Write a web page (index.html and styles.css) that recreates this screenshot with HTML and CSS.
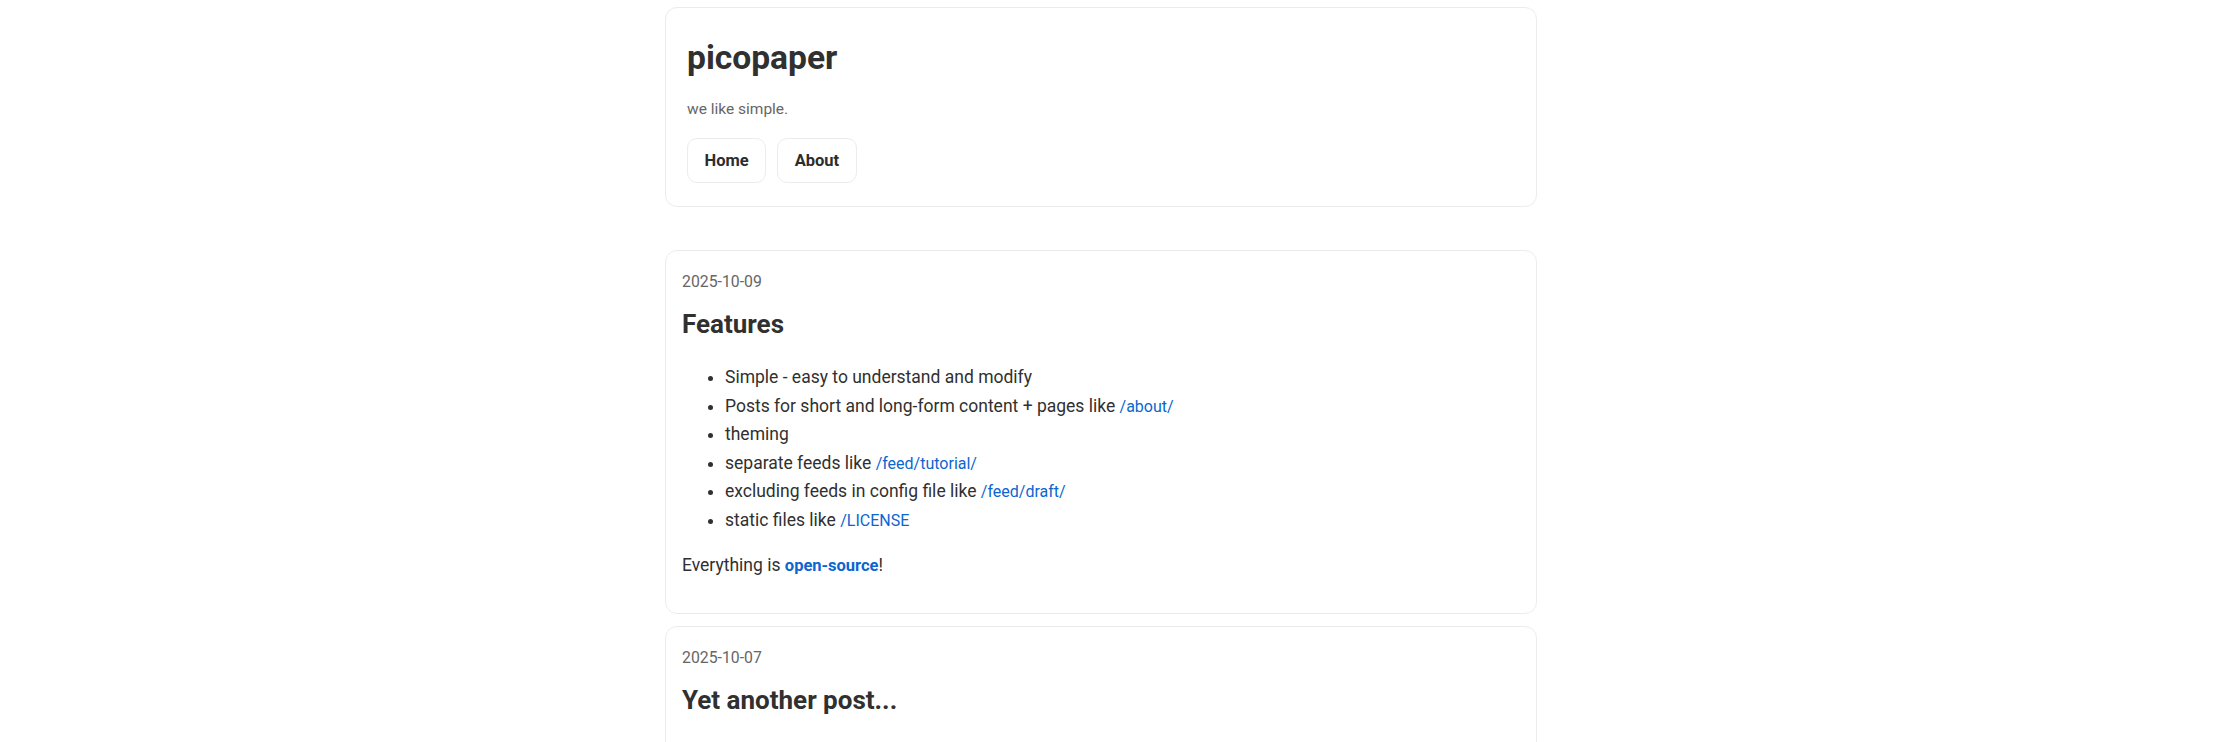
FILE: index.html
```html
<!DOCTYPE html>
<html lang="en">
<head>
  <meta charset="UTF-8">
  <meta name="viewport" content="width=device-width, initial-scale=1.0">
  <title>picopaper</title>
  <link rel="stylesheet" href="styles.css">
</head>
<body>

  <main class="page">
    <header class="site-header">
      <h1 class="site-title">picopaper</h1>
      <p class="site-tagline">we like simple.</p>
      <nav class="site-nav">
        <a class="nav-btn" href="#">Home</a>
        <a class="nav-btn" href="#">About</a>
      </nav>
    </header>

    <div class="posts">
      <article class="post">
        <div class="post-date">2025-10-09</div>
        <h2 class="post-title">Features</h2>
        <ul class="post-list">
          <li>Simple - easy to understand and modify</li>
          <li>Posts for short and long-form content + pages like <a class="inline-link" href="#">/about/</a></li>
          <li>theming</li>
          <li>separate feeds like <a class="inline-link" href="#">/feed/tutorial/</a></li>
          <li>excluding feeds in config file like <a class="inline-link" href="#">/feed/draft/</a></li>
          <li>static files like <a class="inline-link" href="#">/LICENSE</a></li>
        </ul>
        <p class="post-text">Everything is <a class="strong-link" href="#">open-source</a>!</p>
      </article>

      <article class="post">
        <div class="post-date">2025-10-07</div>
        <h2 class="post-title">Yet another post...</h2>
        <p class="post-text">This is just another post to fill the feed.</p>
      </article>
    </div>
  </main>

</body>
</html>
```

FILE: styles.css
```css
body {
  font-family: Roboto, 'Noto Sans', 'Liberation Sans', sans-serif;
  font-size: 17.5px;
  line-height: 28.56px;
  background-color: #fff;
  color: #303030;
  margin: 0;
  padding: 7px 32px 0 0;
}
.page {
  width: 872px;
  margin: 0 auto;
}
.site-header {
  border: 1px solid #ececec;
  border-radius: 12px;
  padding: 20px 21px 23px;
}
.site-title {
  font-size: 33.6px;
  line-height: 40px;
  font-weight: 700;
  margin: 10px 0 19px;
}
.site-tagline {
  font-size: 15.5px;
  line-height: 25px;
  color: #666;
  margin: 0 0 16px;
}
.site-nav {
  display: flex;
  gap: 11px;
}
.nav-btn {
  display: inline-block;
  padding: 11px 16.5px;
  font-size: 16.5px;
  line-height: 21px;
  font-weight: 700;
  color: #2c2c2c;
  text-decoration: none;
  border: 1px solid #ececec;
  border-radius: 10px;
}
.nav-btn:hover {
  background-color: #f6f6f6;
}
.posts {
  display: flex;
  flex-direction: column;
  gap: 12px;
  margin-top: 43px;
}
.post {
  border: 1px solid #ececec;
  border-radius: 12px;
  padding: 17px 16px 16px;
}
.post-date {
  font-size: 15.8px;
  line-height: 27px;
  color: #666;
}
.post-title {
  font-size: 26px;
  line-height: 31px;
  font-weight: 700;
  margin: 14px 0 23px;
}
.post-list {
  margin: 0;
  padding-left: 43px;
}
.post-text {
  margin: 16.8px 0;
}
.inline-link {
  font-size: 16px;
  line-height: 1;
  color: #0b66d0;
  text-decoration: none;
}
.strong-link {
  font-size: 16.5px;
  line-height: 1;
  font-weight: 700;
  color: #0b66d0;
  text-decoration: none;
}
```
